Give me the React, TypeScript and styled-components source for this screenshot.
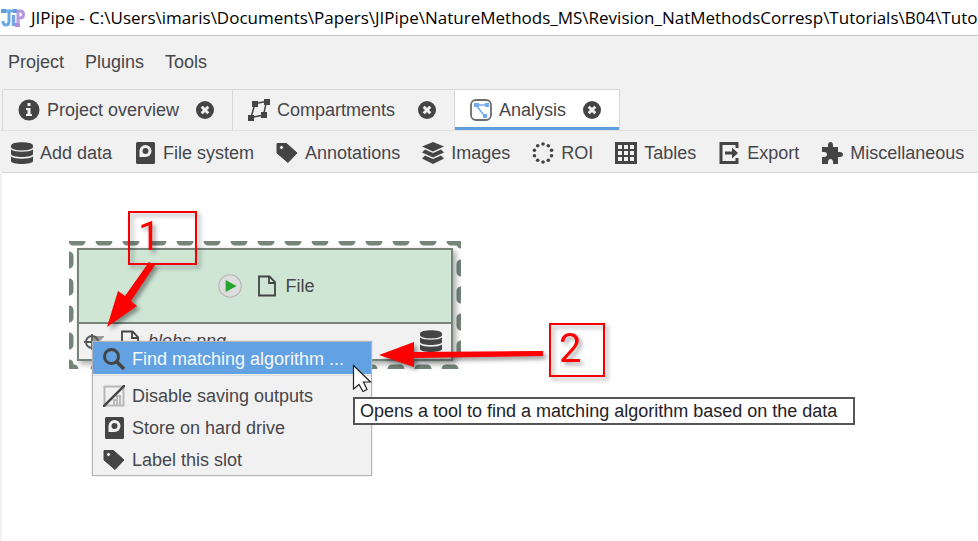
import React from 'react';
import styled, { createGlobalStyle, css } from 'styled-components';

const ink = '#444444';
const slate = '#75857a';

const GlobalStyle = createGlobalStyle`
  * { box-sizing: border-box; }
  html, body { margin: 0; }
  body { overflow: hidden; background: #f1f1f1; }
  button { border: 0; padding: 0; background: none; font: inherit; color: inherit; }
`;

const Window = styled.div`
  display: flex;
  flex-direction: column;
  height: 100vh;
  background: #f1f1f1;
  color: #46464b;
  font-family: 'Liberation Sans', Arial, sans-serif;
  font-size: 18px;
  line-height: 22px;
  white-space: nowrap;
`;

const TitleBar = styled.header`
  display: flex;
  align-items: center;
  gap: 6px;
  height: 36px;
  flex: none;
  overflow: hidden;
  background: #ffffff;
  border-bottom: 1px solid #c4c4c4;
  color: #000000;
`;

const Title = styled.h1`
  margin: 0;
  font-family: 'Open Sans', 'Noto Sans', sans-serif;
  font-size: 17px;
  font-weight: 400;
  line-height: 24px;
`;

const MenuBar = styled.nav`
  display: flex;
  align-items: center;
  gap: 21px;
  height: 53px;
  flex: none;
  padding: 0 8px 2px;
`;

const TabStrip = styled.div`
  display: flex;
  flex: none;
  height: 42px;
  padding-left: 2px;
  border-bottom: 1px solid #e2e2e2;
`;

const Tab = styled.div<{ $active?: boolean; $width: number }>`
  display: flex;
  align-items: center;
  justify-content: space-between;
  min-width: ${(p) => p.$width}px;
  padding: 0 18px 0 15px;
  border: 1px solid #d8d8d8;
  border-bottom: 0;
  & + & { border-left: 0; }
  ${(p) =>
    p.$active &&
    css`
      background: #ffffff;
      box-shadow: inset 0 -3px 0 #5f9fe0;
    `}
`;

const TabLabel = styled.button`
  display: flex;
  align-items: center;
  gap: 7px;
`;

const CloseButton = styled.button`
  display: flex;
`;

const Toolbar = styled.div`
  display: flex;
  align-items: center;
  gap: 22px;
  flex: none;
  height: 42px;
  margin-left: 2px;
  padding: 2px 0 0 9px;
  border-bottom: 1px solid #d8d8d8;
`;

const ToolButton = styled.button`
  display: flex;
  align-items: center;
  gap: 7px;
`;

const Canvas = styled.main`
  position: relative;
  flex: 1;
  min-height: 0;
  margin-left: 2px;
  overflow: hidden;
  background: #ffffff;
`;

const Placed = styled.div<{ $x: number; $y: number }>`
  position: absolute;
  left: ${(p) => p.$x}px;
  top: ${(p) => p.$y}px;
`;

const Overlay = styled.svg`
  position: absolute;
  left: 0;
  top: 0;
  pointer-events: none;
`;

const ArrowGroup = styled.g`
  fill: #ff0000;
  filter: drop-shadow(3px 3px 2px rgba(0, 0, 0, 0.4));
`;

const Node = styled.section`
  width: 376px;
  border: 2px solid ${slate};
  background: #f1f1f1;
  box-shadow: 3px 3px 6px rgba(0, 0, 0, 0.35);
`;

const NodeHeader = styled.div`
  display: flex;
  align-items: center;
  justify-content: center;
  gap: 14px;
  height: 74px;
  padding-left: 3px;
  background: #cfe6d5;
  border-bottom: 2px solid ${slate};
`;

const RunButton = styled.button`
  display: flex;
`;

const NodeName = styled.span`
  display: flex;
  align-items: center;
  gap: 7px;
`;

const SlotRow = styled.div`
  display: flex;
  align-items: center;
  justify-content: space-between;
  height: 35px;
  padding: 0 9px 2px 3px;
`;

const SlotInfo = styled.span`
  display: flex;
  align-items: center;
  gap: 15px;
`;

const ContextMenu = styled.div`
  display: flex;
  flex-direction: column;
  width: 280px;
  background: #f1f1f1;
  border: 1px solid #b4b4b8;
  box-shadow: 0 0 1px #b4b4b8;
`;

const MenuItem = styled.button<{ $highlighted?: boolean }>`
  display: flex;
  align-items: center;
  gap: 7px;
  height: 32px;
  padding: 2px 10px 0;
  background: ${(p) => (p.$highlighted ? '#63a2e2' : 'transparent')};
  color: ${(p) => (p.$highlighted ? '#f4f8fc' : 'inherit')};
`;

const MenuSeparator = styled.hr`
  width: 100%;
  margin: 1px 0 3px;
  border: 0;
  border-top: 1px solid #dcdcdc;
`;

const Tooltip = styled.div`
  min-width: 502px;
  padding: 1px 5px;
  background: #ffffff;
  border: 2px solid #555555;
  color: #222228;
`;

const Callout = styled.div<{ $wide?: boolean }>`
  width: ${(p) => (p.$wide ? 69 : 56)}px;
  height: 54px;
  padding-left: 8px;
  border: 2px solid #f40000;
  color: #ff0000;
  font-family: Roboto, Arial, sans-serif;
  font-size: 40px;
  line-height: 48px;
  filter: drop-shadow(3px 3px 2px rgba(0, 0, 0, 0.35));
`;

type IconProps = { children: React.ReactNode; size?: number };
const Icon = ({ children, size = 22 }: IconProps) => (
  <svg width={size} height={size} viewBox="0 0 22 22" fill={ink} aria-hidden="true">
    {children}
  </svg>
);

const InfoIcon = () => (
  <Icon>
    <circle cx="11" cy="11" r="10.500" />
    <path d="M9.500 4h3v3h-3z M8 9h4.500v6H14v2H8v-2h1.500v-4H8z" fill="#f1f1f1" />
  </Icon>
);

const CloseIcon = () => (
  <Icon size={18}>
    <circle cx="11" cy="11" r="11" />
    <path d="M7 7l8 8M15 7l-8 8" stroke="#f1f1f1" strokeWidth="3.600" />
  </Icon>
);

const CompartmentsIcon = () => (
  <Icon>
    <path d="M7 4.500L18.500 2.500L15.500 16L3 18.500Z" fill="none" stroke={ink} strokeWidth="1.500" />
    <path d="M4 2h6v6H4zM16 0h6v6h-6zM13 13h6v6h-6zM0 16h6v6H0z" />
  </Icon>
);

const AnalysisIcon = () => (
  <Icon>
    <rect x="1" y="1" width="20" height="20" rx="5" fill="#fff" stroke="#6c6c6c" strokeWidth="1.800" />
    <path d="M6 6h10M6 6l8.500 11" stroke="#73a9f5" strokeWidth="1.500" />
    <path d="M4 4h5v4H4zM15 4h4v4h-4zM13 15h4v4h-4z" fill="#73a9f5" />
  </Icon>
);

const DatabaseIcon = () => (
  <Icon>
    <path d="M0 3.500C0-1 22-1 22 3.500V5C22 9.500 0 9.500 0 5Z" />
    <path d="M0 7.500C4 10.500 18 10.500 22 7.500V12C22 16 0 16 0 12Z" />
    <path d="M0 14.500C4 17.500 18 17.500 22 14.500V19C22 23 0 23 0 19Z" />
  </Icon>
);

const DriveIcon = () => (
  <Icon>
    <rect x="2" y="0" width="19" height="22" rx="1.500" />
    <path d="M5.500 15V9a6 6 0 1 1 6 6H5.500z" fill="#f1f1f1" />
    <circle cx="11.500" cy="9" r="3" />
  </Icon>
);

const TagIcon = () => (
  <Icon>
    <path
      fillRule="evenodd"
      d="M1 1.500H10.500L21 11L12 20.500L1 11ZM3.500 5.500a2 2 0 1 0 4 0a2 2 0 1 0-4 0Z"
      stroke={ink}
      strokeLinejoin="round"
    />
  </Icon>
);

const LayersIcon = () => (
  <Icon>
    <path d="M11 0L22 4.500L11 9.500L0 4.500Z" />
    <path d="M0 10.500L3 7.500L11 11L19 7.500L22 10.500L11 15.500Z" />
    <path d="M0 16.500L3 13.500L11 17L19 13.500L22 16.500L11 22Z" />
  </Icon>
);

const RoiIcon = () => (
  <Icon>
    {[0, 1, 2, 3, 4, 5, 6, 7, 8, 9].map((i) => (
      <circle
        key={i}
        cx={11 + 9 * Math.cos(((i * 36 + 18) * Math.PI) / 180)}
        cy={11 + 9 * Math.sin(((i * 36 + 18) * Math.PI) / 180)}
        r="1.800"
      />
    ))}
  </Icon>
);

const TableIcon = () => (
  <Icon>
    <rect width="22" height="22" />
    <path
      d="M3 3h4v4H3zM9 3h4v4H9zM15 3h4v4h-4zM3 9h4v4H3zM9 9h4v4H9zM15 9h4v4h-4zM3 15h4v4H3zM9 15h4v4H9zM15 15h4v4h-4z"
      fill="#f1f1f1"
    />
  </Icon>
);

const ExportIcon = () => (
  <Icon>
    <path d="M19 6V1.500H3V20.500H19V16" fill="none" stroke={ink} strokeWidth="3" />
    <path d="M7 9.500h7V5.500l6 5.500l-6 5.500V12.500H7z" />
  </Icon>
);

const PuzzleIcon = () => (
  <Icon>
    <path d="M1 5H7V3C7 -1 12 -1 12 3V5H17V10H19C23 10 23 15 19 15H17V22H12V20C12 16 7 16 7 20V22H1V15H3C7 15 7 10 3 10H1Z" />
  </Icon>
);

const FileIcon = () => (
  <Icon>
    <path d="M3 1.500H13.500L19 7V20.500H3ZM13 2V8H19" fill="none" stroke={ink} strokeWidth="1.800" />
  </Icon>
);

const RunIcon = () => (
  <Icon size={24}>
    <circle cx="11" cy="11" r="10.300" fill="#dddddd" stroke="#b5b5b5" strokeWidth="1" />
    <path d="M7 5.500L17 11L7 16.500Z" fill="#23a52d" />
  </Icon>
);

const TargetIcon = () => (
  <Icon>
    <path d="M11 6H23L17 12H11Z" fill="#999" />
    <circle cx="10" cy="12" r="6" fill="none" stroke="#555" strokeWidth="1.800" />
    <path d="M2 12H18M10 4V20" stroke="#555" strokeWidth="1.800" />
  </Icon>
);

const SearchIcon = () => (
  <Icon>
    <circle cx="8.500" cy="8.500" r="7" fill="none" stroke={ink} strokeWidth="3" />
    <path d="M13 13L21 21" stroke={ink} strokeWidth="3.500" />
  </Icon>
);

const NoSaveIcon = () => (
  <Icon>
    <path d="M1.500 1.500H20.500V20.500H1.500ZM11 20V15H14V20M14 20V11H17V20" fill="none" stroke="#b8b8b8" strokeWidth="2" />
    <path d="M0 22L22 0" stroke={ink} strokeWidth="2.500" />
  </Icon>
);

const AppLogo = () => (
  <svg width="25" height="22" viewBox="0 0 25 22" fill="none" aria-hidden="true">
    <path d="M3 4H16M9 4V14Q9 18 6 18Q3 18 3 14" stroke="#6aaae6" strokeWidth="3" />
    <path d="M1 2h5v4H1zM13 2h4v4h-4z" fill="#5b9fe3" />
    <path d="M13.500 8V19" stroke="#79a5e6" strokeWidth="3.500" />
    <path d="M18 19V4H20Q23.500 4 23.500 7.500T20 11H18" stroke="#b39add" strokeWidth="3" />
    <path d="M15 16h5v4h-5z" fill="#b08ddd" />
  </svg>
);

const tabs = [
  { label: 'Project overview', icon: <InfoIcon />, width: 231 },
  { label: 'Compartments', icon: <CompartmentsIcon />, width: 222 },
  { label: 'Analysis', icon: <AnalysisIcon />, width: 165, active: true },
];

const tools = [
  { label: 'Add data', icon: <DatabaseIcon /> },
  { label: 'File system', icon: <DriveIcon /> },
  { label: 'Annotations', icon: <TagIcon /> },
  { label: 'Images', icon: <LayersIcon /> },
  { label: 'ROI', icon: <RoiIcon /> },
  { label: 'Tables', icon: <TableIcon /> },
  { label: 'Export', icon: <ExportIcon /> },
  { label: 'Miscellaneous', icon: <PuzzleIcon /> },
];

export default function App() {
  return (
    <Window>
      <GlobalStyle />
      <TitleBar>
        <AppLogo />
        <Title>
          {'JIPipe - C:\\Users\\imaris\\Documents\\Papers\\JIPipe\\NatureMethods_MS\\Revision_NatMethodsCorresp\\Tutorials\\B04\\Tuto'}
        </Title>
      </TitleBar>
      <MenuBar>
        <button>Project</button>
        <button>Plugins</button>
        <button>Tools</button>
      </MenuBar>
      <TabStrip role="tablist">
        {tabs.map((t) => (
          <Tab key={t.label} $active={t.active} $width={t.width}>
            <TabLabel role="tab" aria-selected={!!t.active}>
              {t.icon}
              {t.label}
            </TabLabel>
            <CloseButton aria-label={`Close ${t.label}`}>
              <CloseIcon />
            </CloseButton>
          </Tab>
        ))}
      </TabStrip>
      <Toolbar role="toolbar">
        {tools.map((t) => (
          <ToolButton key={t.label}>
            {t.icon}
            {t.label}
          </ToolButton>
        ))}
      </Toolbar>
      <Canvas>
        <Placed $x={67} $y={68}>
          <svg width="392" height="128" fill="none" stroke={slate} strokeWidth="9" strokeLinecap="round" aria-hidden="true">
            <path d="M4 0H392" strokeDasharray="8 19" />
            <path d="M0 15V128" strokeDasharray="8 19" />
            <path d="M392 0V3M392 23V128" strokeDasharray="8 19" />
            <path d="M0 128H5M26 128H390" strokeDasharray="8 19" />
          </svg>
        </Placed>
        <Placed $x={75} $y={75}>
          <Node>
            <NodeHeader>
              <RunButton aria-label="Run">
                <RunIcon />
              </RunButton>
              <NodeName>
                <FileIcon />
                File
              </NodeName>
            </NodeHeader>
            <SlotRow>
              <SlotInfo>
                <TargetIcon />
                <NodeName>
                  <FileIcon />
                  <em>blobs.png</em>
                </NodeName>
              </SlotInfo>
              <DatabaseIcon />
            </SlotRow>
          </Node>
        </Placed>
        <Placed $x={90} $y={168}>
          <ContextMenu role="menu">
            <MenuItem role="menuitem" $highlighted>
              <SearchIcon />
              Find matching algorithm ...
            </MenuItem>
            <MenuSeparator />
            <MenuItem role="menuitem">
              <NoSaveIcon />
              Disable saving outputs
            </MenuItem>
            <MenuItem role="menuitem">
              <DriveIcon />
              Store on hard drive
            </MenuItem>
            <MenuItem role="menuitem">
              <TagIcon />
              Label this slot
            </MenuItem>
          </ContextMenu>
        </Placed>
        <Placed $x={351} $y={224}>
          <Tooltip role="tooltip">Opens a tool to find a matching algorithm based on the data</Tooltip>
        </Placed>
        <Placed $x={126} $y={38}>
          <Callout $wide>1</Callout>
        </Placed>
        <Placed $x={547} $y={150}>
          <Callout>2</Callout>
        </Placed>
        <Overlay width="600" height="300" viewBox="2 173 600 300" aria-hidden="true">
          <ArrowGroup>
            <path d="M149 262L155 265L131 301L137 306L107 327L118 291L125 296Z" />
            <path d="M379 355L414 342V352L543 351V356L414 358V367Z" />
          </ArrowGroup>
          <path
            d="M353.500 365.500V389L359 384.500L363 391.500L367 389.500L363.500 382H370.500Z"
            fill="#fff"
            stroke="#222"
            strokeWidth="1.200"
          />
        </Overlay>
      </Canvas>
    </Window>
  );
}
